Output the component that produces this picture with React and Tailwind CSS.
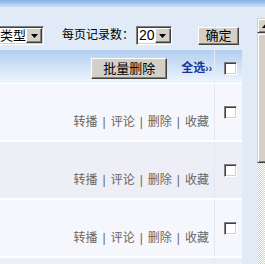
import React from "react";

const font = { fontFamily: '"Liberation Sans", "Noto Sans CJK SC", sans-serif' };

function Arrow() {
  return (
    <div className="w-[16px] h-[15px] bg-[#d4d0c8] border border-t-white border-l-white border-r-[#404040] border-b-[#404040] shadow-[inset_-1px_-1px_#808080] flex items-center justify-center">
      <svg width="7" height="4" viewBox="0 0 7 4"><path d="M0 0H7L3.5 4Z" fill="#000" /></svg>
    </div>
  );
}

function Checkbox() {
  return (
    <div className="w-[13px] h-[13px] bg-white border border-t-[#808080] border-l-[#808080] border-r-white border-b-white shadow-[inset_1px_1px_#404040,inset_-1px_-1px_#d4d0c8]" />
  );
}

function Btn({ children, className }) {
  return (
    <div className={"bg-[#d4d0c8] border border-t-white border-l-white border-r-[#404040] border-b-[#404040] shadow-[inset_-1px_-1px_#808080] flex items-center justify-center text-black text-[13px] " + className}>
      {children}
    </div>
  );
}

function Row({ bg }) {
  return (
    <div className={"flex h-[58px] border-b-2 border-white " + bg}>
      <div className="w-[215px] border-r border-[#e4e7ef] flex justify-end pr-[5px] pt-[30px] text-[12px] leading-[16px] text-[#666]">
        <span>转播</span>
        <span className="px-[5px]">|</span>
        <span>评论</span>
        <span className="px-[5px]">|</span>
        <span>删除</span>
        <span className="px-[5px]">|</span>
        <span>收藏</span>
      </div>
      <div className="w-[27px] pl-[9px] pt-[22px]">
        <Checkbox />
      </div>
    </div>
  );
}

export default function App() {
  return (
    <div className="w-[265px] h-[264px] overflow-hidden relative bg-[#e0ebf7]" style={font}>
      <div className="h-[7px] bg-linear-to-b from-[#7fb1e4] to-[#cde0f5]" />
      <div className="h-[43px] flex items-start pt-[19px]">
        <div className="h-[19px] w-[44px] bg-white border border-t-[#808080] border-b-white border-r-white border-l-0 shadow-[inset_0_1px_#404040,inset_-1px_-1px_#d4d0c8] flex items-center">
          <span className="text-[13px] leading-[15px] text-black flex-1">类型</span>
          <div className="mr-[1px]"><Arrow /></div>
        </div>
        <span className="ml-[18px] text-[12px] leading-[19px] text-black">每页记录数：</span>
        <div className="ml-[2px] h-[19px] w-[36px] bg-white border border-t-[#808080] border-l-[#808080] border-b-white border-r-white shadow-[inset_1px_1px_#404040,inset_-1px_-1px_#d4d0c8] flex items-center">
          <span className="text-[14px] leading-[15px] text-black flex-1 pl-[2px]">20</span>
          <div className="mr-[1px]"><Arrow /></div>
        </div>
        <Btn className="ml-[26px] mt-[1px] w-[41px] h-[18px]">确定</Btn>
      </div>
      <div className="w-[242px]">
        <div className="flex h-[34px] border-b border-white bg-linear-to-b from-[#b2cfef] to-[#eff5fc]">
          <div className="w-[215px] border-r border-[#e3ebf6] flex items-start justify-end pr-[2px]">
            <Btn className="mt-[8px] w-[76px] h-[21px]">批量删除</Btn>
            <span className="ml-[14px] mt-[10px] text-[12px] leading-[16px] font-bold text-[#17369a]">全选<span className="text-[10px]">››</span></span>
          </div>
          <div className="w-[27px] pl-[9px] pt-[12px]">
            <Checkbox />
          </div>
        </div>
        <Row bg="bg-[#f6f7fc]" />
        <Row bg="bg-[#eeeff6]" />
        <Row bg="bg-[#f6f7fc]" />
        <div className="flex h-[10px] bg-[#eeeff6]">
          <div className="w-[215px] border-r border-[#e4e7ef]" />
        </div>
      </div>
      <div className="absolute left-[257px] top-[18px] bottom-0 w-[17px] flex flex-col">
        <div className="h-[15px] bg-[#d4d0c8] border border-t-[#d4d0c8] border-l-[#d4d0c8] border-r-[#404040] border-b-[#404040] shadow-[inset_1px_1px_white,inset_-1px_-1px_#808080] flex items-center justify-center">
          <svg width="7" height="4" viewBox="0 0 7 4"><path d="M0 4H7L3.5 0Z" fill="#000" /></svg>
        </div>
        <div className="h-[130px] bg-[#d4d0c8] border border-t-[#d4d0c8] border-l-[#d4d0c8] border-r-[#404040] border-b-[#404040] shadow-[inset_1px_1px_white,inset_-1px_-1px_#808080]" />
        <div className="flex-1 bg-[conic-gradient(#d4d0c8_25%,#fff_0_50%,#d4d0c8_0_75%,#fff_0)] bg-[length:2px_2px]" />
      </div>
    </div>
  );
}
